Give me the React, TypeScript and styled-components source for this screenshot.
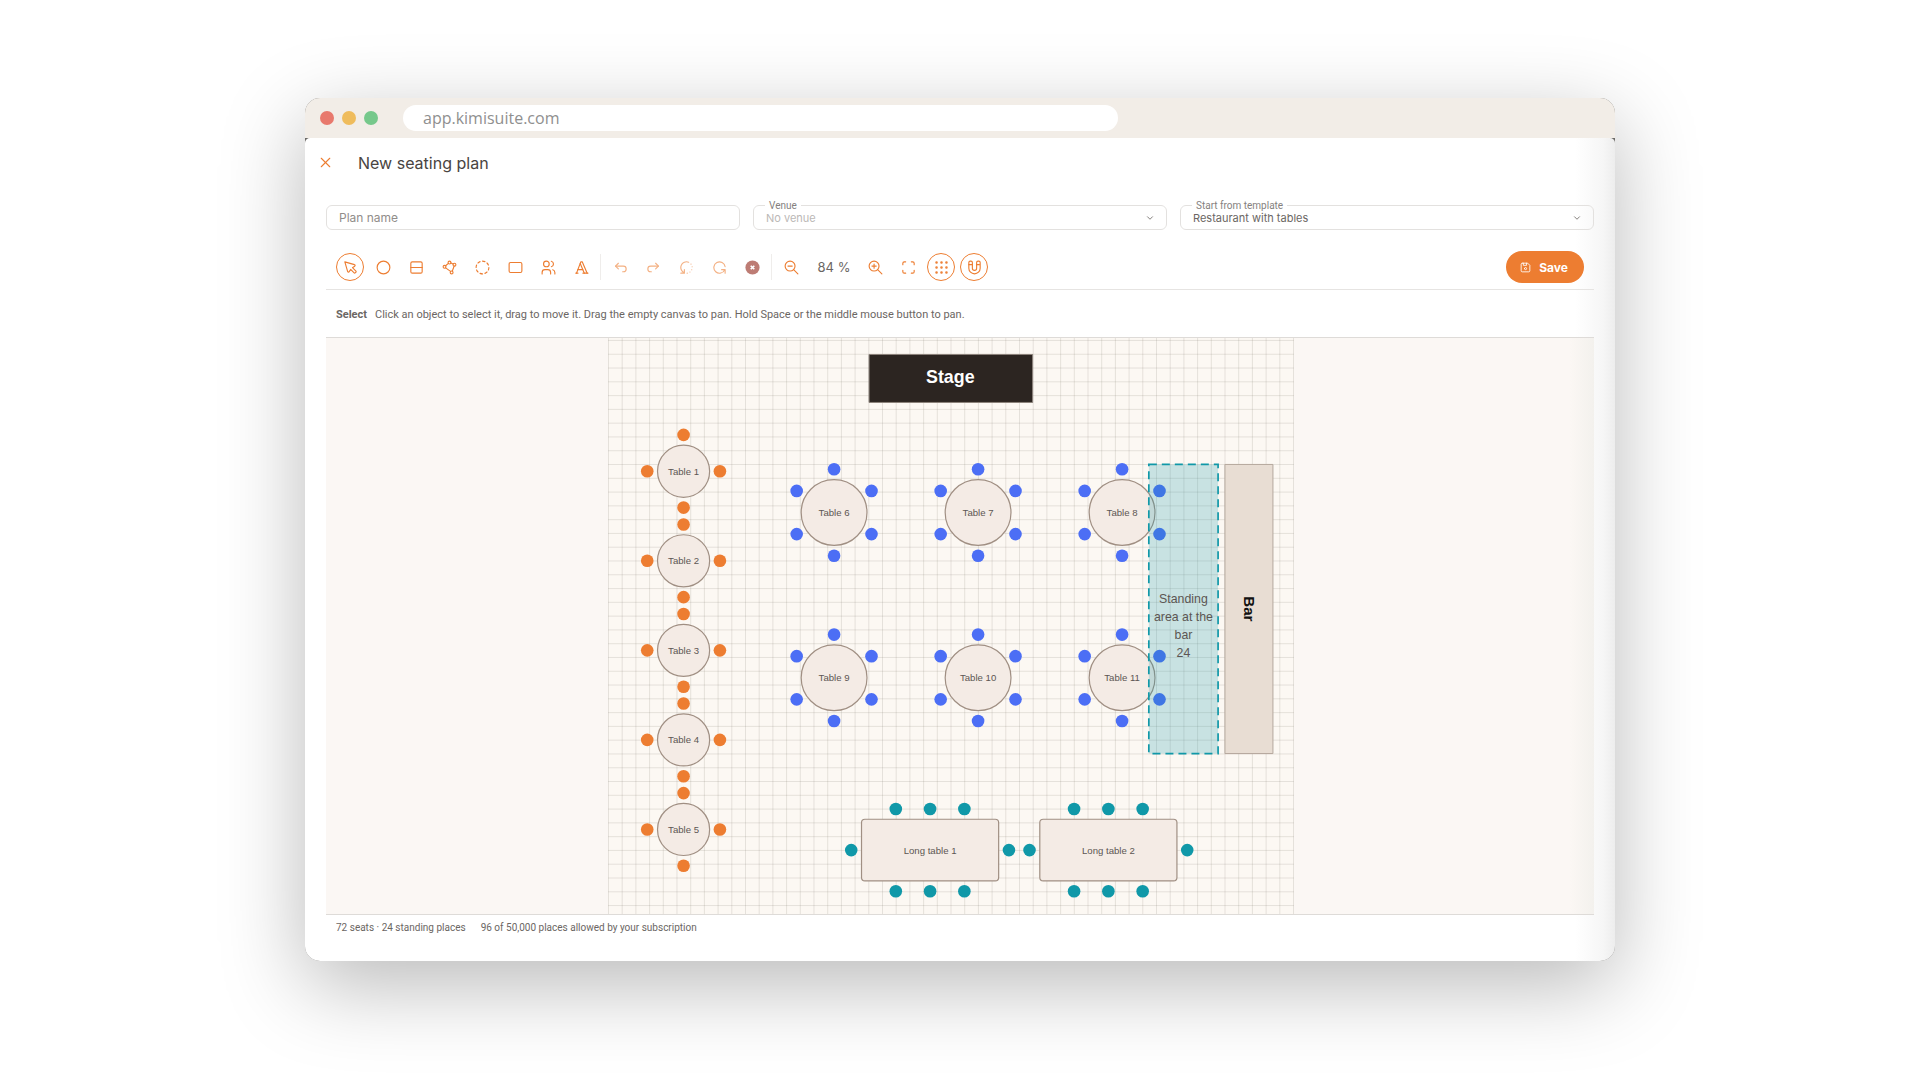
import React from 'react';
import styled, { createGlobalStyle, css } from 'styled-components';
import {
  TbX, TbPointer, TbCircle, TbLayoutRows, TbPolygon, TbCircleDashed, TbRectangle, TbUsers, TbTypography,
  TbArrowBackUp, TbArrowForwardUp, TbRotate2, TbRotate, TbZoomOut, TbZoomIn,
  TbMaximize, TbGridDots, TbMagnet, TbDeviceFloppy, TbChevronDown,
} from 'react-icons/tb';

const orange = '#ed7d31';
const uiFont = "Inter, 'Liberation Sans', sans-serif";
const smallFont = "Roboto, 'Liberation Sans', sans-serif";

const GlobalStyle = createGlobalStyle`
  * { box-sizing: border-box; }
  body { margin: 0; background: #fff; font-family: ${uiFont}; color: #6b6663; }
  button, input, select { font: inherit; color: inherit; }
`;

const Page = styled.div`
  min-height: 100vh;
  padding: 98px 305px 119px;
  overflow: hidden;
`;

const BrowserWindow = styled.div`
  border-radius: 15px;
  background: #6b6966;
  overflow: hidden;
`;

const WindowShadow = styled.div`
  border-radius: 15px;
  box-shadow: 0 24px 84px rgba(0, 0, 0, 0.28);
`;

const TitleBar = styled.header`
  display: flex;
  align-items: center;
  height: 40px;
  padding: 0 15px;
  background: #f2ede7;
`;

const Lights = styled.div`
  display: flex;
  gap: 8px;
  margin-right: 25px;
`;

const Light = styled.span<{ $color: string }>`
  width: 14px;
  height: 14px;
  border-radius: 50%;
  background: ${(p) => p.$color};
`;

const Address = styled.input`
  flex: 0 1 715px;
  min-width: 0;
  height: 26px;
  padding: 0 20px;
  border: 0;
  border-radius: 13px;
  background: #fff;
  color: #8f8f8f;
  font-family: 'Open Sans', 'Noto Sans', sans-serif;
  font-size: 16px;
`;

const Dialog = styled.main`
  padding-bottom: 19px;
  border-radius: 5px 5px 0 0;
  background: linear-gradient(to left, #ededed 0, #f6f6f6 12px, #fff 40px);
`;

const DialogHeader = styled.div`
  display: flex;
  align-items: center;
  gap: 24px;
  height: 49px;
  padding: 0 12px;
`;

const CloseButton = styled.button`
  display: flex;
  padding: 0;
  border: 0;
  background: none;
  color: ${orange};
  font-size: 17px;
`;

const Title = styled.h1`
  margin: 0;
  color: #494441;
  font-size: 16px;
  font-weight: 400;
  line-height: 24px;
`;

const Body = styled.div`
  padding: 18px 21px 0;
`;

const Fields = styled.div`
  display: grid;
  grid-template-columns: repeat(3, 1fr);
  gap: 13px;
`;

const Field = styled.div`
  position: relative;
`;

const controlStyle = css`
  display: block;
  width: 100%;
  height: 25px;
  padding: 0 12px;
  border: 1px solid #e3e1df;
  border-radius: 6px;
  background: transparent;
`;

const TextInput = styled.input`
  ${controlStyle}
  font-size: 12px;
  &::placeholder { color: #918d8a; opacity: 1; }
`;

const Select = styled.select<{ $muted?: boolean }>`
  ${controlStyle}
  appearance: none;
  font-size: 11px;
  color: ${(p) => (p.$muted ? '#bbb8b6' : '#6b6663')};
`;

const FieldLabel = styled.label`
  position: absolute;
  top: -5px;
  left: 12px;
  padding: 0 4px;
  background: #fff;
  color: #85817e;
  font-family: ${smallFont};
  font-size: 10px;
  line-height: 11px;
`;

const SelectArrow = styled(TbChevronDown)`
  position: absolute;
  top: 8px;
  right: 12px;
  font-size: 10px;
  pointer-events: none;
`;

const Toolbar = styled.div`
  display: flex;
  align-items: center;
  gap: 5px;
  height: 60px;
  padding: 15px 10px 0;
  border-bottom: 1px solid #e6e4e2;
`;

const ToolButton = styled.button<{ $active?: boolean; $faded?: boolean }>`
  display: flex;
  align-items: center;
  justify-content: center;
  width: 28px;
  height: 28px;
  padding: 0;
  border: 1px solid ${(p) => (p.$active ? orange : 'transparent')};
  border-radius: 50%;
  background: none;
  color: ${orange};
  font-size: 17px;
  svg { stroke-width: 1.6; opacity: ${(p) => (p.$faded ? 0.6 : 1)}; }
`;

const Separator = styled.span`
  width: 1px;
  height: 26px;
  background: #efedeb;
`;

const ZoomValue = styled.output`
  width: 46px;
  padding-left: 2px;
  color: #6b6663;
  font-size: 13px;
  text-align: center;
`;

const SaveButton = styled.button`
  display: flex;
  align-items: center;
  gap: 7px;
  height: 32px;
  margin-left: auto;
  padding: 0 16px 0 13px;
  border: 0;
  border-radius: 16px;
  background: ${orange};
  color: #fff;
  font-size: 12px;
  font-weight: 700;
  svg { font-size: 13px; stroke-width: 1.6; }
`;

const Hint = styled.p`
  display: flex;
  align-items: center;
  gap: 8px;
  height: 48px;
  margin: 0;
  padding: 1px 10px 0;
  border-bottom: 1px solid #dedbd8;
  font-family: ${smallFont};
  font-size: 11px;
`;

const Canvas = styled.section`
  display: flex;
  justify-content: center;
  padding-right: 19px;
  border-bottom: 1px solid #dedbd8;
  background: linear-gradient(to left, #f3f1ed 0, #fbf7f4 24px);
`;

const Plan = styled.svg`
  display: block;
  width: 686px;
  height: 576px;
  font-family: 'Liberation Sans', Arial, sans-serif;
  text-anchor: middle;
  line, rect, circle { vector-effect: non-scaling-stroke; }
`;

const Status = styled.footer`
  display: flex;
  gap: 15px;
  padding: 5px 10px 6px;
  font-family: ${smallFont};
  font-size: 10px;
  line-height: 16px;
`;

type Point = [number, number];

const Seats = ({ at, color }: { at: Point[]; color: string }) => (
  <g fill={color}>{at.map(([x, y]) => <circle key={`${x},${y}`} cx={x} cy={y} r="9.2" />)}</g>
);

const TableName = ({ x, y, children }: { x: number; y: number; children: string }) => (
  <text x={x} y={y + 5} fontSize="14" fill="#5c5653">{children}</text>
);

const RoundTable = ({ x, y, r, seats, color, name }: { x: number; y: number; r: number; seats: number; color: string; name: string }) => {
  const around: Point[] = Array.from({ length: seats }, (_, i) => {
    const angle = (i / seats) * 2 * Math.PI;
    return [x + Math.sin(angle) * (r + 15), y - Math.cos(angle) * (r + 15)];
  });
  return (
    <g>
      <circle cx={x} cy={y} r={r} fill="#f4ebe5" stroke="#a08f83" strokeWidth="1.2" />
      <Seats at={around} color={color} />
      <TableName x={x} y={y}>{name}</TableName>
    </g>
  );
};

const LongTable = ({ x, y, name }: { x: number; y: number; name: string }) => {
  const seats: Point[] = [[x - 115, y], [x + 115, y]];
  [-50, 0, 50].forEach((dx) => seats.push([x + dx, y - 60], [x + dx, y + 60]));
  return (
    <g>
      <rect x={x - 100} y={y - 45} width="200" height="90" rx="5" fill="#f4ebe5" stroke="#a08f83" strokeWidth="1.2" />
      <Seats at={seats} color="#1098a8" />
      <TableName x={x} y={y}>{name}</TableName>
    </g>
  );
};

const range = (n: number) => Array.from({ length: n }, (_, i) => i);

/* The plan is drawn in room units: 1000 by 840, one grid square is 20. */
const FloorPlan = () => (
  <Plan viewBox="0 0 1000 840" role="img" aria-label="Seating plan">
    <rect width="1000" height="840" fill="#fcf8f3" />
    <g stroke="#786e64" strokeOpacity="0.17">
      {range(51).map((i) => <line key={`v${i}`} x1={0.5 + i * 19.98} x2={0.5 + i * 19.98} y1="0" y2="840" />)}
      {range(42).map((i) => <line key={`h${i}`} x1="0" x2="1000" y1={3.6 + i * 20.1} y2={3.6 + i * 20.1} />)}
    </g>
    <rect x="380.5" y="24" width="238.5" height="70" fill="#2c2521" stroke="#8b827b" />
    <text x="499" y="66" fontSize="26" fontWeight="700" fill="#fff">Stage</text>
    {range(5).map((i) => (
      <RoundTable key={i} x={110} y={194.3 + i * 130.6} r={38} seats={4} color={orange} name={`Table ${i + 1}`} />
    ))}
    {range(6).map((i) => (
      <RoundTable key={i} x={329.5 + (i % 3) * 210} y={254.5 + Math.floor(i / 3) * 241} r={48} seats={6} color="#4c6ef5" name={`Table ${i + 6}`} />
    ))}
    <LongTable x={469.5} y={746.8} name="Long table 1" />
    <LongTable x={729.5} y={746.8} name="Long table 2" />
    <rect x="788.5" y="184.4" width="101" height="421.6" fill="#1098a8" fillOpacity="0.22" stroke="#1098a8" strokeWidth="1.7" strokeDasharray="8 5" />
    <g fontSize="18" fill="#5c5653">
      <text x="839" y="387">Standing</text>
      <text x="839" y="413">area at the</text>
      <text x="839" y="439">bar</text>
      <text x="839" y="465">24</text>
    </g>
    <rect x="899.5" y="184.4" width="70" height="421.6" fill="#e8ddd3" stroke="#b5a89d" />
    <text transform="translate(928 395) rotate(90)" fontSize="22" fontWeight="700" fill="#111">Bar</text>
  </Plan>
);

const DeleteIcon = () => (
  <svg width="17" height="17" viewBox="0 0 24 24" fill="none" aria-hidden="true">
    <circle cx="12" cy="12" r="10" fill="#bd7c74" />
    <path d="M9.5 9.5l5 5m0 -5l-5 5" stroke="#fff" style={{ strokeWidth: 2.4 }} />
  </svg>
);

const drawTools = [
  { name: 'Select', icon: <TbPointer />, active: true },
  { name: 'Round table', icon: <TbCircle /> },
  { name: 'Long table', icon: <TbLayoutRows /> },
  { name: 'Polygon', icon: <TbPolygon /> },
  { name: 'Standing area', icon: <TbCircleDashed /> },
  { name: 'Rectangle', icon: <TbRectangle /> },
  { name: 'Seats', icon: <TbUsers /> },
  { name: 'Text', icon: <TbTypography /> },
];

const editTools = [
  { name: 'Undo', icon: <TbArrowBackUp /> },
  { name: 'Redo', icon: <TbArrowForwardUp /> },
  { name: 'Rotate left', icon: <TbRotate2 /> },
  { name: 'Rotate right', icon: <TbRotate /> },
];

export default function App() {
  return (
    <Page>
      <GlobalStyle />
      <WindowShadow>
        <BrowserWindow>
          <TitleBar>
            <Lights>
              <Light $color="#e8796d" />
              <Light $color="#efbc5c" />
              <Light $color="#76c88b" />
            </Lights>
            <Address aria-label="Address" defaultValue="app.kimisuite.com" />
          </TitleBar>
          <Dialog>
            <DialogHeader>
              <CloseButton aria-label="Close"><TbX strokeWidth={1.5} /></CloseButton>
              <Title>New seating plan</Title>
            </DialogHeader>
            <Body>
              <Fields>
                <Field>
                  <TextInput aria-label="Plan name" placeholder="Plan name" />
                </Field>
                <Field>
                  <Select id="venue" $muted><option>No venue</option></Select>
                  <FieldLabel htmlFor="venue">Venue</FieldLabel>
                  <SelectArrow />
                </Field>
                <Field>
                  <Select id="template"><option>Restaurant with tables</option></Select>
                  <FieldLabel htmlFor="template">Start from template</FieldLabel>
                  <SelectArrow />
                </Field>
              </Fields>
              <Toolbar>
                {drawTools.map((t) => (
                  <ToolButton key={t.name} aria-label={t.name} $active={t.active}>{t.icon}</ToolButton>
                ))}
                <Separator />
                {editTools.map((t) => (
                  <ToolButton key={t.name} aria-label={t.name} $faded>{t.icon}</ToolButton>
                ))}
                <ToolButton aria-label="Delete"><DeleteIcon /></ToolButton>
                <Separator />
                <ToolButton aria-label="Zoom out"><TbZoomOut /></ToolButton>
                <ZoomValue>84 %</ZoomValue>
                <ToolButton aria-label="Zoom in"><TbZoomIn /></ToolButton>
                <ToolButton aria-label="Fit to screen"><TbMaximize /></ToolButton>
                <ToolButton aria-label="Show grid" $active><TbGridDots /></ToolButton>
                <ToolButton aria-label="Snap to grid" $active><TbMagnet /></ToolButton>
                <SaveButton><TbDeviceFloppy />Save</SaveButton>
              </Toolbar>
              <Hint>
                <strong>Select</strong>
                <span>Click an object to select it, drag to move it. Drag the empty canvas to pan. Hold Space or the middle mouse button to pan.</span>
              </Hint>
              <Canvas><FloorPlan /></Canvas>
              <Status>
                <span>72 seats · 24 standing places</span>
                <span>96 of 50,000 places allowed by your subscription</span>
              </Status>
            </Body>
          </Dialog>
        </BrowserWindow>
      </WindowShadow>
    </Page>
  );
}
